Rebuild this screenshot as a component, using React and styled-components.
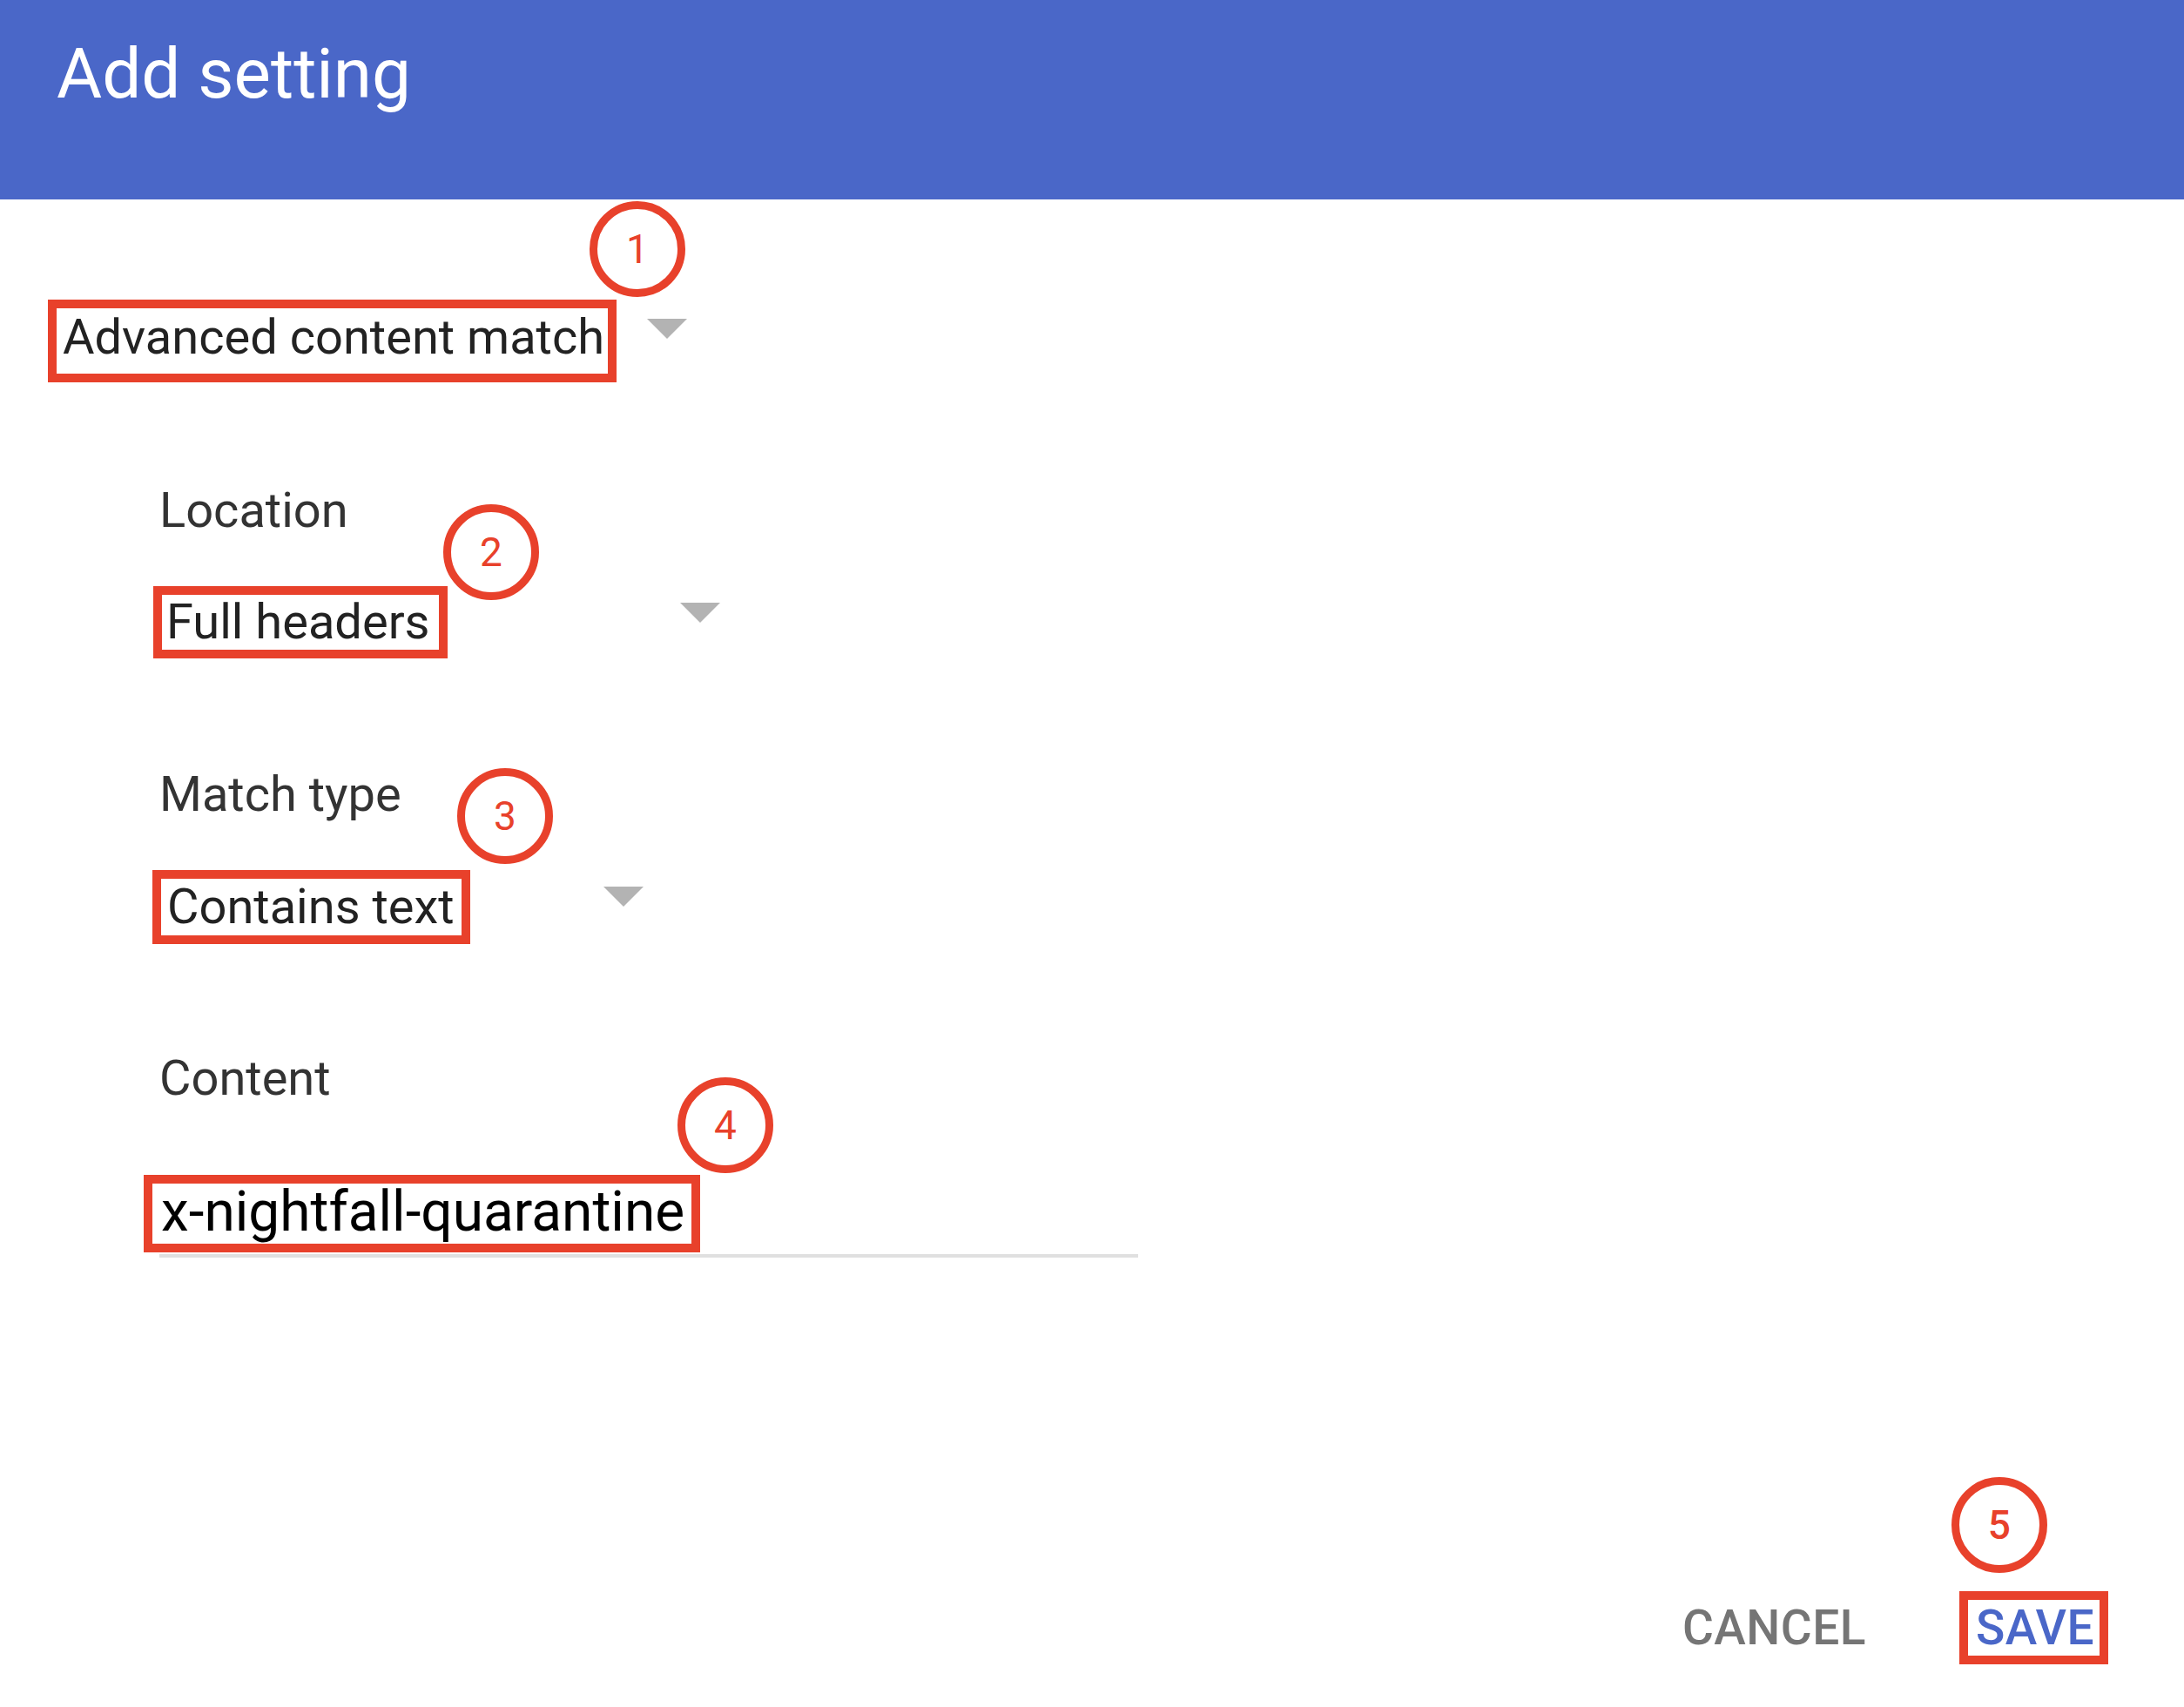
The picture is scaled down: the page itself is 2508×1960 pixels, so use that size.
import React from 'react';
import styled, { createGlobalStyle } from 'styled-components';

const RED = '#e8412b';
const BLUE = '#4a67c8';

const GlobalStyle = createGlobalStyle`
  * { box-sizing: border-box; }
  html, body { margin: 0; padding: 0; background: #fff; }
  body { font-family: Roboto, 'Noto Sans', Arial, sans-serif; }
`;

const Dialog = styled.div`
  display: flex;
  flex-direction: column;
  min-height: 100vh;
  width: 100%;
`;

const Header = styled.header`
  height: 229px;
  background: ${BLUE};
  padding: 45px 0 0 65px;
`;

const Title = styled.h1`
  margin: 0;
  font-size: 80px;
  line-height: 80px;
  font-weight: 400;
  color: #fff;
`;

const Body = styled.div`
  display: flex;
  flex-direction: column;
  padding: 115px 0 0 55px;
`;

const Select = styled.div`
  position: relative;
  display: flex;
  align-items: flex-start;
  justify-content: space-between;
  width: ${(p) => p.$w}px;
  margin-left: ${(p) => p.$shift || 0}px;
  font-size: 56px;
  color: #222;
`;

// red annotation frame drawn round a value
const Marked = styled.span`
  display: inline-block;
  width: ${(p) => p.$w}px;
  border: 10px solid ${RED};
  padding: ${(p) => p.$pt || 0}px 0 ${(p) => p.$pb || 0}px ${(p) => p.$pl}px;
  line-height: ${(p) => p.$lh}px;
  white-space: nowrap;
`;

const Caret = styled.svg`
  flex: none;
  display: block;
  margin-top: ${(p) => p.$top}px;
`;

const Fields = styled.div`
  display: flex;
  flex-direction: column;
  padding-left: 128px;
`;

const Field = styled.div`
  position: relative;
  margin-top: ${(p) => p.$mt}px;
`;

const Label = styled.div`
  font-size: 56px;
  line-height: 66px;
  color: #333;
  margin-bottom: ${(p) => p.$gap}px;
`;

const Input = styled.div`
  width: 1124px;
  border-bottom: 4px solid #e0e0e0;
  padding-bottom: 2px;
  font-size: 64px;
  color: #000;
`;

const InputValue = styled(Marked)`
  margin-left: -18px;
`;

const Badge = styled.span`
  position: absolute;
  left: ${(p) => p.$x}px;
  top: ${(p) => p.$y}px;
  width: 110px;
  height: 110px;
  border: 9px solid ${RED};
  border-radius: 50%;
  display: flex;
  align-items: center;
  justify-content: center;
  color: ${RED};
  font-size: 46px;
  line-height: 1;
`;

const Actions = styled.div`
  margin-top: auto;
  display: flex;
  justify-content: flex-end;
  align-items: center;
  gap: 107px;
  padding: 0 87px 49px 0;
`;

const TextButton = styled.span`
  position: relative;
  font-size: 55px;
  font-weight: 500;
  letter-spacing: 0.5px;
  color: ${(p) => (p.$primary ? BLUE : '#757575')};
  line-height: 63px;
`;

function Arrow({ top }) {
  return (
    <Caret $top={top} width="46" height="23" viewBox="0 0 46 23">
      <polygon points="0,0 46,0 23,23" fill="#b3b3b3" />
    </Caret>
  );
}

export default function App() {
  return (
    <>
      <GlobalStyle />
      <Dialog>
        <Header>
          <Title>Add setting</Title>
        </Header>

        <Body>
          <Select $w={734}>
            <Marked $w={653} $pl={7} $lh={66} $pb={9}>Advanced content match</Marked>
            <Arrow top={22} />
            <Badge $x={622} $y={-113}>1</Badge>
          </Select>

          <Fields>
            <Field $mt={114}>
              <Label $gap={54}>Location</Label>
              <Select $w={651} $shift={-7}>
                <Marked $w={338} $pl={5} $lh={63}>Full headers</Marked>
                <Arrow top={19} />
              </Select>
              <Badge $x={326} $y={26}>2</Badge>
            </Field>

            <Field $mt={123}>
              <Label $gap={54}>Match type</Label>
              <Select $w={564} $shift={-8}>
                <Marked $w={365} $pl={7} $lh={65}>Contains text</Marked>
                <Arrow top={19} />
              </Select>
              <Badge $x={342} $y={3}>3</Badge>
            </Field>

            <Field $mt={121}>
              <Label $gap={78}>Content</Label>
              <Input>
                <InputValue $w={639} $pl={10} $lh={66} $pb={3}>x-nightfall-quarantine</InputValue>
              </Input>
              <Badge $x={595} $y={32}>4</Badge>
            </Field>
          </Fields>
        </Body>

        <Actions>
          <TextButton>CANCEL</TextButton>
          <TextButton $primary>
            <Marked $w={171} $pl={9} $lh={63} $pt={1}>SAVE</Marked>
            <Badge $x={-9} $y={-131}>5</Badge>
          </TextButton>
        </Actions>
      </Dialog>
    </>
  );
}
